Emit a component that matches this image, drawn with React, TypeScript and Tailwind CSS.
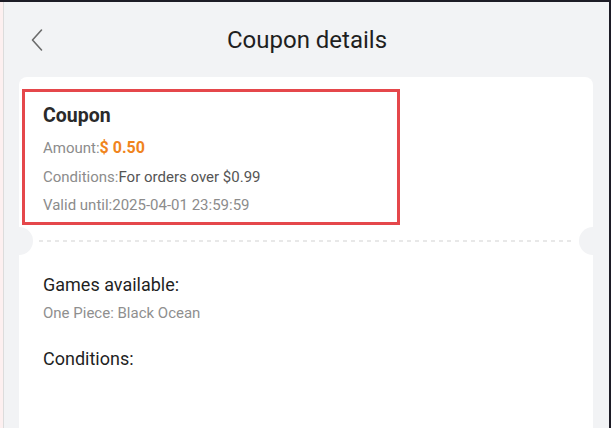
import React from "react";

const CouponDetails = () => {
  return (
    <div
      className="w-[611px] h-[428px] overflow-hidden flex flex-col bg-[#f2f3f5]"
      style={{ fontFamily: "Roboto, 'Noto Sans', sans-serif" }}
    >
      <div className="h-[2px] bg-[#1d1c26] shrink-0"></div>
      <div className="flex flex-1 min-h-0">
        <div className="w-[4px] bg-[#fdf0f0] border-r border-[#dcdcdc] shrink-0"></div>
        <div className="flex-1 flex flex-col min-w-0">
          {/* header */}
          <div className="h-[75px] shrink-0 relative flex items-center justify-center">
            <button className="absolute left-[27px] top-[26px] w-[12px] h-[24px] flex items-center justify-center">
              <svg width="12" height="24" viewBox="0 0 12 24" fill="none">
                <polyline
                  points="10.5,2 1.5,12 10.5,22"
                  stroke="#6b6b6b"
                  strokeWidth="1.6"
                  strokeLinecap="round"
                  strokeLinejoin="round"
                />
              </svg>
            </button>
            <h1 className="text-[24px] leading-[30px] text-[#1f1f1f] mt-[1px] ml-[1px]">Coupon details</h1>
          </div>

          {/* card */}
          <div className="ml-[15px] mr-[16px] flex-1 bg-white rounded-t-[8px] pt-[12px]">
            <div className="ml-[3px] w-[378px] border-[3px] border-[#e5474b] pl-[18px] pt-[11px] pb-[3px]">
              <p className="text-[19.5px] leading-[26px] font-bold text-[#2a2a2a]">Coupon</p>
              <p className="mt-[4px] text-[15px] leading-[29px] text-[#8c8c8c]">
                Amount:<span className="text-[#f0841c] font-bold text-[16px]">$ 0.50</span>
              </p>
              <p className="text-[15px] leading-[29px] text-[#8c8c8c]">
                Conditions:<span className="text-[#555555]">For orders over $0.99</span>
              </p>
              <p className="text-[15px] leading-[27px] text-[#8c8c8c]">Valid until:2025-04-01 23:59:59</p>
            </div>

            {/* tear line */}
            <div className="relative mt-[2px] h-[28px] flex items-center">
              <div className="absolute left-[-14px] top-0 w-[28px] h-[28px] rounded-full bg-[#f2f3f5]"></div>
              <div className="absolute right-[-14px] top-0 w-[28px] h-[28px] rounded-full bg-[#f2f3f5]"></div>
              <div className="mx-[20px] flex-1 h-[2px] bg-[linear-gradient(to_right,#e8e8e8_50%,transparent_50%)] bg-[length:8px_2px] bg-repeat-x"></div>
            </div>

            <div className="pl-[24px] pt-[17px]">
              <p className="text-[18px] leading-[26px] text-[#1f1f1f]">Games available:</p>
              <p className="mt-[5px] text-[15px] leading-[20px] text-[#8f8f8f]">One Piece: Black Ocean</p>
              <p className="mt-[23px] text-[18px] leading-[26px] text-[#1f1f1f]">Conditions:</p>
            </div>
          </div>
        </div>
        <div className="w-[2px] bg-[#1d1c26] shrink-0"></div>
      </div>
    </div>
  );
};

export default function App() {
  return <CouponDetails />;
}
